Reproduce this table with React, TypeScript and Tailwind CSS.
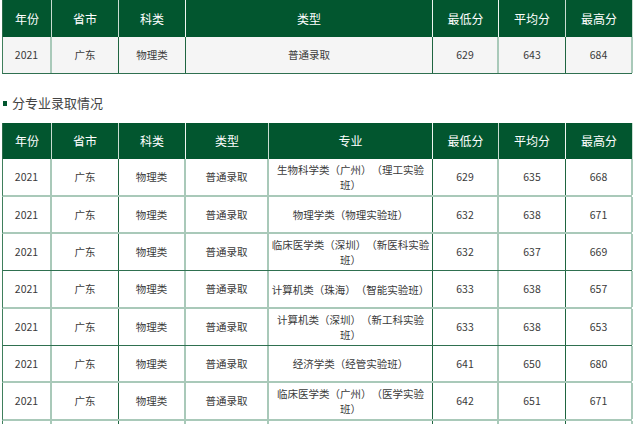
import React from "react";

const FONT = { fontFamily: '"Noto Sans CJK SC", "Noto Sans", sans-serif' };

const t1Cols = "grid grid-cols-[49px_67px_67px_247px_66px_67px_67px]";
const t2Cols = "grid grid-cols-[49px_67px_67px_83px_164px_66px_67px_67px]";

const LIGHT = "border-r-2 border-r-[#a9c9b9]";
const DARK = "border-r border-r-[#1f6540]";

const t1Right = [LIGHT, DARK, DARK, DARK, LIGHT, DARK, LIGHT];
const t2Right = [LIGHT, DARK, LIGHT, LIGHT, DARK, LIGHT, DARK, LIGHT];

const HL = "border-r border-r-[#c9dcd1]";
const HW = "border-r border-r-[#eef5f0]";
const t1HeadRight = [HL, HL, HW, HW, HW, HL, HL];
const t2HeadRight = [HL, HL, HW, HL, HW, HL, HW, HL];

const rows = [
  { major: "生物科学类（广州）（理工实验班）", min: "629", avg: "635", max: "668", h: "h-[38px]", b: "border-b-2 border-b-[#a9c9b9]" },
  { major: "物理学类（物理实验班）", min: "632", avg: "638", max: "671", h: "h-[37px]", b: "border-b-2 border-b-[#a9c9b9]" },
  { major: "临床医学类（深圳）（新医科实验班）", min: "632", avg: "637", max: "669", h: "h-[37px]", b: "border-b border-b-[#2f7050]" },
  { major: "计算机类（珠海）（智能实验班）", min: "633", avg: "638", max: "657", h: "h-[38px]", b: "border-b-2 border-b-[#a9c9b9]" },
  { major: "计算机类（深圳）（新工科实验班）", min: "633", avg: "638", max: "653", h: "h-[37px]", b: "border-b border-b-[#2f7050]" },
  { major: "经济学类（经管实验班）", min: "641", avg: "650", max: "680", h: "h-[37px]", b: "border-b-2 border-b-[#a9c9b9]" },
  { major: "临床医学类（广州）（医学实验班）", min: "642", avg: "651", max: "671", h: "h-[38px]", b: "border-b-2 border-b-[#a9c9b9]" },
  { major: "", min: "", avg: "", max: "", h: "h-[38px]", b: "border-b-2 border-b-[#a9c9b9]" },
];

function Head({ cols, right, labels, h }: { cols: string; right: string[]; labels: string[]; h: string }) {
  return (
    <div className={`${cols} ${h} bg-[#02562f] border-l border-l-[#2c6b4a]`}>
      {labels.map((l, i) => (
        <div key={i} className={`flex items-center justify-center text-white text-[12px] ${right[i]}`}>
          {l}
        </div>
      ))}
    </div>
  );
}

export default function App() {
  return (
    <div className="w-[636px] h-[424px] overflow-hidden bg-white text-[#3a3a3a] [text-spacing-trim:space-all]" style={FONT}>
      <div className="pl-[2px]">
        {/* Table 1 */}
        <div className="w-[630px]">
          <Head cols={t1Cols} right={t1HeadRight} labels={["年份", "省市", "科类", "类型", "最低分", "平均分", "最高分"]} h="h-[37px]" />
          <div className={`${t1Cols} h-[37px] bg-[#f5f5f5] border-l border-l-[#3f7f5c] border-b border-b-[#2f7050] text-[10.5px]`}>
            {["2021", "广东", "物理类", "普通录取", "629", "643", "684"].map((v, i) => (
              <div key={i} className={`flex items-center justify-center ${t1Right[i]}`}>
                {v}
              </div>
            ))}
          </div>
        </div>

        {/* Section heading */}
        <div className="flex items-center h-[14px] mt-[22px] mb-[13px]">
          <span className="block w-[4px] h-[5px] bg-[#02562f] ml-[1px] mr-[5px]" />
          <span className="text-[13px] text-[#444444] leading-[14px]">分专业录取情况</span>
        </div>

        {/* Table 2 */}
        <div className="w-[630px]">
          <Head cols={t2Cols} right={t2HeadRight} labels={["年份", "省市", "科类", "类型", "专业", "最低分", "平均分", "最高分"]} h="h-[36px]" />
          {rows.map((r, ri) => (
            <div key={ri} className={`${t2Cols} ${r.h} ${r.b} bg-white border-l border-l-[#3f7f5c] text-[10.5px]`}>
              {(r.major ? ["2021", "广东", "物理类", "普通录取", r.major, r.min, r.avg, r.max] : ["", "", "", "", "", "", "", ""]).map((v, i) => (
                <div
                  key={i}
                  className={`flex items-center justify-center text-center ${t2Right[i]} ${i === 4 ? "px-[2px] leading-[15px] [text-spacing-trim:space-all]" : ""}`}
                >
                  {v}
                </div>
              ))}
            </div>
          ))}
        </div>
      </div>
    </div>
  );
}
